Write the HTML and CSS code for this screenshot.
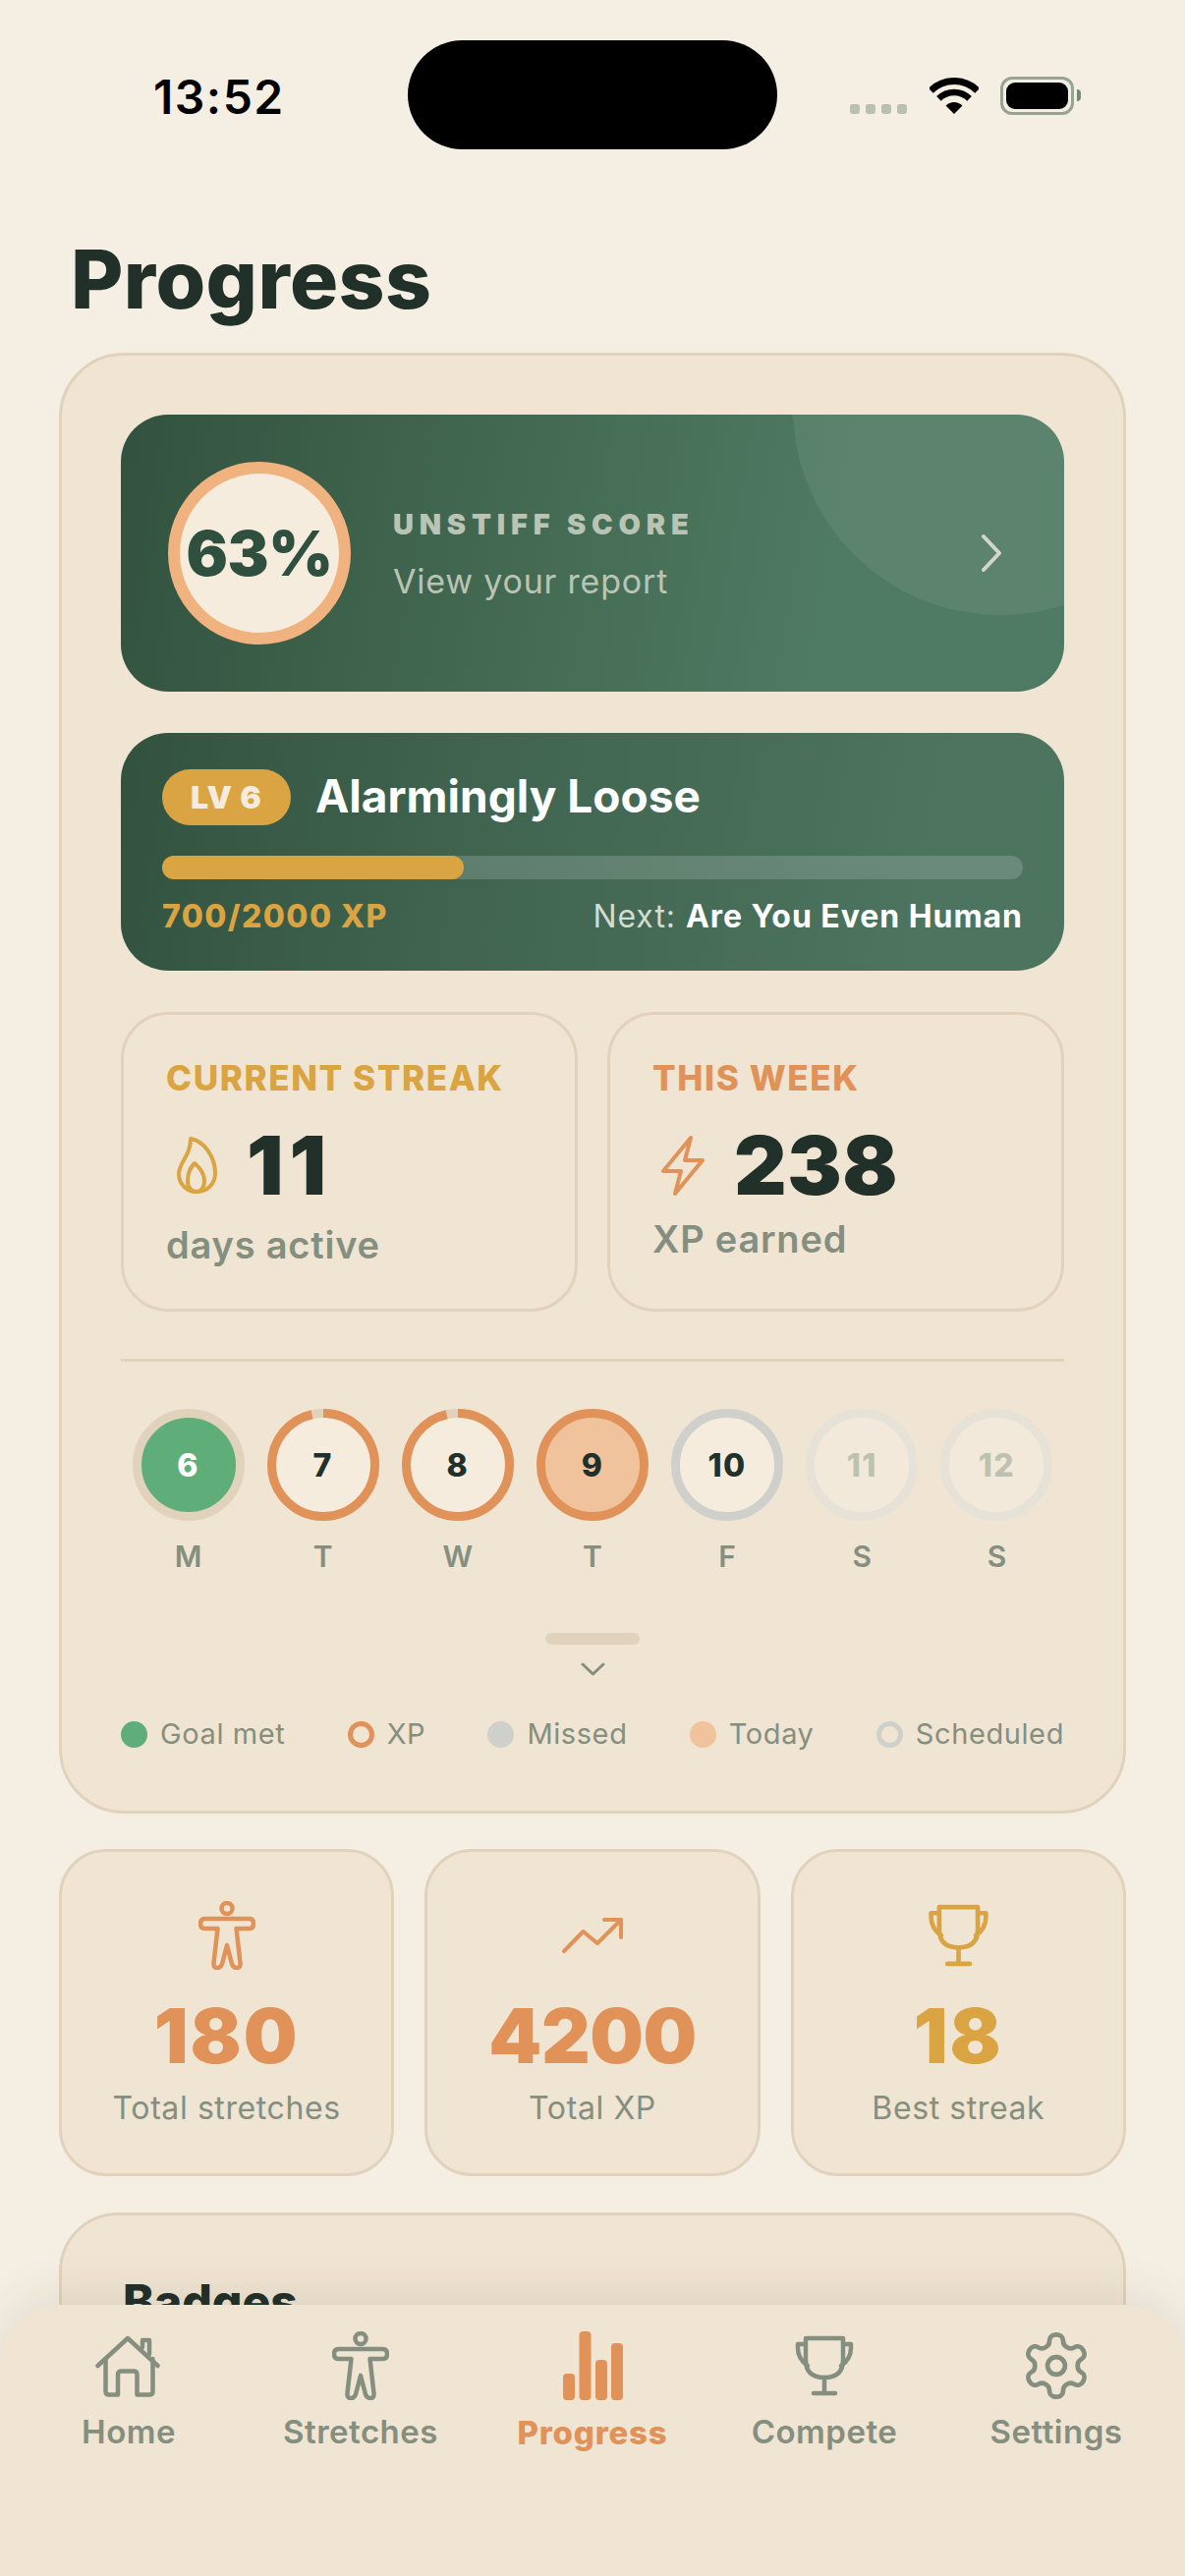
FILE: index.html
```html
<!DOCTYPE html>
<html lang="en">
<head>
    <meta charset="UTF-8">
    <meta name="viewport" content="width=device-width, initial-scale=1.0">
    <title>Progress</title>
    <link rel="stylesheet" href="styles.css">
</head>
<body>
<div class="screen">

    <!-- Status bar -->
    <div class="status">
        <span class="time">13:52</span>
        <div class="island"></div>
        <div class="status-icons">
            <div class="signal"><i></i><i></i><i></i><i></i></div>
            <svg class="wifi" width="50" height="37" viewBox="0 0 50 37">
                <path d="M1.3 13.3A33.5 33.5 0 0 1 48.7 13.3" fill="none" stroke="#000" stroke-width="7"/>
                <path d="M9.4 21.4A22 22 0 0 1 40.6 21.4" fill="none" stroke="#000" stroke-width="6.5"/>
                <path d="M25 37L16.5 28.5A12 12 0 0 1 33.5 28.5Z" fill="#000"/>
            </svg>
            <div class="battery"><div class="battery-fill"></div></div>
            <div class="battery-cap"></div>
        </div>
    </div>

    <h1 class="title">Progress</h1>

    <div class="card main-card">
        <!-- Score -->
        <div class="score">
            <div class="score-circle"></div>
            <div class="score-ring">63%</div>
            <div class="score-text">
                <div class="score-label">UNSTIFF SCORE</div>
                <div class="score-link">View your report</div>
            </div>
            <svg class="score-chevron" width="24" height="40" viewBox="0 0 24 40">
                <path d="M4 3L20 20L4 37" fill="none" stroke="#d4d6cd" stroke-width="4" stroke-linecap="round" stroke-linejoin="round"/>
            </svg>
        </div>

        <!-- Level -->
        <div class="level">
            <div class="level-top">
                <span class="level-badge">LV 6</span>
                <span class="level-name">Alarmingly Loose</span>
            </div>
            <div class="level-bar"><div class="level-fill"></div></div>
            <div class="level-foot">
                <span class="level-xp">700/2000 XP</span>
                <span class="level-next">Next: <b>Are You Even Human</b></span>
            </div>
        </div>

        <!-- Streak and week -->
        <div class="tiles">
            <div class="tile">
                <div class="tile-label gold">CURRENT STREAK</div>
                <div class="tile-value">
                    <svg class="flame" width="41" height="58" viewBox="0 0 41 58" fill="none" stroke="#d9a441" stroke-width="4" stroke-linejoin="round">
                        <path d="M14 2C27 4 39 20 39 37C39 48 31 56 20 56C10 56 2 48 2 38C2 26 14 20 14 2Z"/>
                        <path d="M18 27C24 32 28 38 28 45C28 52 24 56 20 56C15 56 11 52 11 45C11 38 14 31 18 27Z"/>
                    </svg>
                    <span class="spaced">11</span>
                </div>
                <div class="tile-sub">days active</div>
            </div>
            <div class="tile">
                <div class="tile-label orange">THIS WEEK</div>
                <div class="tile-value">
                    <svg class="bolt" width="45" height="62" viewBox="0 0 45 62" fill="none" stroke="#e09259" stroke-width="4" stroke-linejoin="round">
                        <path d="M31 3L3 37H21L15 60L43 26H25Z"/>
                    </svg>
                    <span>238</span>
                </div>
                <div class="tile-sub tile-sub-tight">XP earned</div>
            </div>
        </div>

        <div class="divider"></div>

        <!-- Week -->
        <div class="week">
            <div class="day">
                <div class="day-ring">
                    <svg width="114" height="114" viewBox="0 0 114 114">
                        <circle class="disc-goal" cx="57" cy="57" r="50"/>
                        <circle class="track" cx="57" cy="57" r="52.5"/>
                    </svg>
                    <span class="day-num white">6</span>
                </div>
                <span class="day-name">M</span>
            </div>
            <div class="day">
                <div class="day-ring">
                    <svg width="114" height="114" viewBox="0 0 114 114">
                        <circle class="disc" cx="57" cy="57" r="50"/>
                        <circle class="track" cx="57" cy="57" r="52.5"/>
                        <circle class="arc" cx="57" cy="57" r="52.5" pathLength="100" stroke-dasharray="96.5 3.5"/>
                    </svg>
                    <span class="day-num">7</span>
                </div>
                <span class="day-name">T</span>
            </div>
            <div class="day">
                <div class="day-ring">
                    <svg width="114" height="114" viewBox="0 0 114 114">
                        <circle class="disc" cx="57" cy="57" r="50"/>
                        <circle class="track" cx="57" cy="57" r="52.5"/>
                        <circle class="arc" cx="57" cy="57" r="52.5" pathLength="100" stroke-dasharray="96.5 3.5"/>
                    </svg>
                    <span class="day-num">8</span>
                </div>
                <span class="day-name">W</span>
            </div>
            <div class="day">
                <div class="day-ring">
                    <svg width="114" height="114" viewBox="0 0 114 114">
                        <circle class="disc-today" cx="57" cy="57" r="50"/>
                        <circle class="arc" cx="57" cy="57" r="52.5"/>
                    </svg>
                    <span class="day-num">9</span>
                </div>
                <span class="day-name">T</span>
            </div>
            <div class="day">
                <div class="day-ring">
                    <svg width="114" height="114" viewBox="0 0 114 114">
                        <circle class="disc" cx="57" cy="57" r="50"/>
                        <circle class="missed" cx="57" cy="57" r="52.5"/>
                    </svg>
                    <span class="day-num">10</span>
                </div>
                <span class="day-name">F</span>
            </div>
            <div class="day">
                <div class="day-ring">
                    <svg width="114" height="114" viewBox="0 0 114 114">
                        <circle class="disc-later" cx="57" cy="57" r="50"/>
                        <circle class="later" cx="57" cy="57" r="52.5"/>
                    </svg>
                    <span class="day-num day-num-later">11</span>
                </div>
                <span class="day-name">S</span>
            </div>
            <div class="day">
                <div class="day-ring">
                    <svg width="114" height="114" viewBox="0 0 114 114">
                        <circle class="disc-later" cx="57" cy="57" r="50"/>
                        <circle class="later" cx="57" cy="57" r="52.5"/>
                    </svg>
                    <span class="day-num day-num-later">12</span>
                </div>
                <span class="day-name">S</span>
            </div>
        </div>

        <div class="handle"></div>
        <svg class="handle-chevron" width="25" height="14" viewBox="0 0 25 14">
            <path d="M2 2L12.5 12L23 2" fill="none" stroke="#848f80" stroke-width="3" stroke-linecap="round" stroke-linejoin="round"/>
        </svg>

        <div class="legend">
            <div class="legend-item"><i class="dot dot-goal"></i>Goal met</div>
            <div class="legend-item"><i class="dot dot-xp"></i>XP</div>
            <div class="legend-item"><i class="dot dot-missed"></i>Missed</div>
            <div class="legend-item"><i class="dot dot-today"></i>Today</div>
            <div class="legend-item"><i class="dot dot-sched"></i>Scheduled</div>
        </div>
    </div>

    <!-- Totals -->
    <div class="totals">
        <div class="card total">
            <div class="total-icon">
                <svg width="58" height="70" viewBox="0 0 58 70" fill="none" stroke="#e09259" stroke-width="4.5" stroke-linejoin="round">
                    <circle cx="29" cy="7.5" r="5.5"/>
                    <path d="M29 45L24 64Q22.5 68 19 68Q15 68 15.5 63L19.5 28H6.5Q2 28 2 23Q2 18 6.5 18H51.5Q56 18 56 23Q56 28 51.5 28H38.5L42.5 63Q43 68 39 68Q35.5 68 34 64Z"/>
                </svg>
            </div>
            <div class="total-num orange">180</div>
            <div class="total-label">Total stretches</div>
        </div>
        <div class="card total">
            <div class="total-icon">
                <svg width="62" height="36" viewBox="0 0 62 36" fill="none" stroke="#e09259" stroke-width="4" stroke-linecap="round" stroke-linejoin="round">
                    <path d="M2 34L21.5 14L36 26L60 2"/>
                    <path d="M43 2H60V20"/>
                </svg>
            </div>
            <div class="total-num total-num-tight orange">4200</div>
            <div class="total-label">Total XP</div>
        </div>
        <div class="card total">
            <div class="total-icon">
                <svg width="63" height="64" viewBox="0 0 60 62" fill="none" stroke="#d9a441" stroke-width="4.5" stroke-linecap="round" stroke-linejoin="round">
                    <path d="M11 3H49V25Q49 43 30 43Q11 43 11 25Z"/>
                    <path d="M11 9H3V13Q3 24 13 31"/>
                    <path d="M49 9H57V13Q57 24 47 31"/>
                    <path d="M30 43V59"/>
                    <path d="M19 59H41"/>
                </svg>
            </div>
            <div class="total-num gold">18</div>
            <div class="total-label">Best streak</div>
        </div>
    </div>

    <div class="card badges">
        <h2 class="badges-title">Badges</h2>
    </div>

    <!-- Tab bar -->
    <nav class="nav">
        <div class="nav-item">
            <div class="nav-icon nav-icon-home">
                <svg width="66" height="63" viewBox="0 0 66 63" fill="none" stroke="#848f80" stroke-width="4.5" stroke-linecap="round" stroke-linejoin="round">
                    <path d="M2.5 31L33 3L63.5 31"/>
                    <path d="M10.5 24V57Q10.5 60.5 14 60.5H23V40Q23 36.5 26.5 36.5H39Q42.5 36.5 42.5 40V60.5H55Q58.5 60.5 58.5 57V24"/>
                    <path d="M48 12V5H55V19"/>
                </svg>
            </div>
            <span>Home</span>
        </div>
        <div class="nav-item">
            <div class="nav-icon">
                <svg width="58" height="70" viewBox="0 0 58 70" fill="none" stroke="#848f80" stroke-width="4.5" stroke-linejoin="round">
                    <circle cx="29" cy="7.5" r="5.5"/>
                    <path d="M29 45L24 64Q22.5 68 19 68Q15 68 15.5 63L19.5 28H6.5Q2 28 2 23Q2 18 6.5 18H51.5Q56 18 56 23Q56 28 51.5 28H38.5L42.5 63Q43 68 39 68Q35.5 68 34 64Z"/>
                </svg>
            </div>
            <span>Stretches</span>
        </div>
        <div class="nav-item nav-active">
            <div class="nav-icon">
                <svg width="61" height="70" viewBox="0 0 61 70" fill="#e09259">
                    <rect x="0" y="43" width="12" height="27" rx="4"/>
                    <rect x="16.5" y="0" width="12" height="70" rx="4"/>
                    <rect x="33" y="29" width="12" height="41" rx="4"/>
                    <rect x="49" y="12" width="12" height="58" rx="4"/>
                </svg>
            </div>
            <span>Progress</span>
        </div>
        <div class="nav-item">
            <div class="nav-icon">
                <svg width="60" height="62" viewBox="0 0 60 62" fill="none" stroke="#848f80" stroke-width="4.5" stroke-linecap="round" stroke-linejoin="round">
                    <path d="M11 3H49V25Q49 43 30 43Q11 43 11 25Z"/>
                    <path d="M11 9H3V13Q3 24 13 31"/>
                    <path d="M49 9H57V13Q57 24 47 31"/>
                    <path d="M30 43V59"/>
                    <path d="M19 59H41"/>
                </svg>
            </div>
            <span>Compete</span>
        </div>
        <div class="nav-item">
            <div class="nav-icon">
                <svg width="76" height="76" viewBox="0 0 24 24" fill="none" stroke="#848f80" stroke-width="1.5" stroke-linecap="round" stroke-linejoin="round">
                    <path d="M12.22 2h-.44a2 2 0 0 0-2 2v.18a2 2 0 0 1-1 1.73l-.43.25a2 2 0 0 1-2 0l-.15-.08a2 2 0 0 0-2.73.73l-.22.38a2 2 0 0 0 .73 2.73l.15.1a2 2 0 0 1 1 1.72v.51a2 2 0 0 1-1 1.74l-.15.09a2 2 0 0 0-.73 2.73l.22.38a2 2 0 0 0 2.73.73l.15-.08a2 2 0 0 1 2 0l.43.25a2 2 0 0 1 1 1.73V20a2 2 0 0 0 2 2h.44a2 2 0 0 0 2-2v-.18a2 2 0 0 1 1-1.73l.43-.25a2 2 0 0 1 2 0l.15.08a2 2 0 0 0 2.73-.73l.22-.39a2 2 0 0 0-.73-2.73l-.15-.08a2 2 0 0 1-1-1.74v-.5a2 2 0 0 1 1-1.74l.15-.09a2 2 0 0 0 .73-2.73l-.22-.38a2 2 0 0 0-2.73-.73l-.15.08a2 2 0 0 1-2 0l-.43-.25a2 2 0 0 1-1-1.73V4a2 2 0 0 0-2-2z"/>
                    <circle cx="12" cy="12" r="2.8"/>
                </svg>
            </div>
            <span>Settings</span>
        </div>
    </nav>

</div>
</body>
</html>
```

FILE: styles.css
```css
* { box-sizing: border-box; }
body { margin: 0; font-family: Inter, "Noto Sans", sans-serif; color: #22302a; }
.screen { position: relative; width: 1206px; height: 2622px; overflow: hidden; background: #f5efe3; }

/* status bar */
.status { display: flex; justify-content: space-between; height: 235px; padding: 75px 106px 0 156px; }
.time { font-size: 48px; line-height: 48px; font-weight: 600; letter-spacing: 1.5px; color: #000; }
.island { position: absolute; left: 415px; top: 41px; width: 376px; height: 111px; border-radius: 56px; background: #000; }
.status-icons { display: flex; align-items: flex-end; height: 41px; }
.signal { display: flex; gap: 6px; margin-right: 23px; }
.signal i { width: 10px; height: 10px; border-radius: 3px; background: #b9c0b0; }
.wifi { margin-right: 22px; }
.battery { width: 75px; height: 39px; padding: 3px; border: 3px solid #97a493; border-radius: 12px; margin-bottom: -1px; }
.battery-fill { width: 100%; height: 100%; border-radius: 9px; background: #000; }
.battery-cap { width: 4px; height: 12px; margin: 0 0 13px 3px; border-radius: 0 4px 4px 0; background: #6f8a78; }

.title { margin: 0 0 24px 72px; font-size: 82px; line-height: 100px; font-weight: 800; letter-spacing: 0.4px; }

/* cards */
.card { border: 3px solid #e0d2bb; background: #f0e4d2; }
.main-card { margin: 0 60px; padding: 60px 60px; border-radius: 66px; }

.score { position: relative; overflow: hidden; display: flex; align-items: center; height: 282px; padding: 0 66px 0 48px; border-radius: 48px; background: linear-gradient(100deg, #32523f 0%, #41664f 35%, #4f7a63 75%); }
.score-circle { position: absolute; left: 684px; top: -218px; width: 422px; height: 422px; border-radius: 50%; background: rgba(255, 255, 255, 0.07); }
.score-ring { position: relative; flex: none; display: flex; align-items: center; justify-content: center; width: 186px; height: 186px; border: 12px solid #f0b27e; border-radius: 50%; background: #f5ecdd; color: #2f4f3f; font-size: 63px; font-weight: 900; letter-spacing: -0.5px; }
.score-text { position: relative; margin-left: 43px; padding-top: 4px; }
.score-label { font-size: 29px; line-height: 36px; font-weight: 900; letter-spacing: 5.8px; color: #b9c4b4; }
.score-link { margin-top: 18px; font-size: 34px; line-height: 44px; letter-spacing: 0.8px; color: #b9c4b4; }
.score-chevron { position: relative; margin-left: auto; margin-right: -4px; }

.level { height: 242px; margin-top: 42px; padding: 37px 42px; border-radius: 48px; background: linear-gradient(100deg, #32523f 0%, #3f634f 35%, #4c745f 85%); }
.level-top { display: flex; align-items: center; gap: 25px; }
.level-badge { width: 131px; height: 57px; border-radius: 29px; background: #d9a441; color: #f5ecdd; font-size: 32px; line-height: 57px; font-weight: 900; letter-spacing: 1px; text-align: center; }
.level-name { margin-top: -3px; color: #fff; font-size: 46px; font-weight: 700; }
.level-bar { height: 24px; margin-top: 31px; border-radius: 12px; background: rgba(255, 255, 255, 0.17); }
.level-fill { width: 35%; height: 100%; border-radius: 12px; background: #d9a441; }
.level-foot { display: flex; justify-content: space-between; margin-top: 18px; font-size: 32px; line-height: 40px; }
.level-xp { color: #d9a441; font-weight: 800; letter-spacing: 1.4px; }
.level-next { color: #d6dbd0; letter-spacing: 0.95px; }
.level-next b { color: #fff; font-weight: 700; }

.tiles { display: grid; grid-template-columns: 1fr 1fr; gap: 30px; margin-top: 42px; }
.tile { height: 305px; padding: 42px 43px 0; border: 3px solid #e0d2bb; border-radius: 48px; }
.tile-label { font-size: 35px; line-height: 44px; font-weight: 800; letter-spacing: 1.6px; }
.gold { color: #d9a441; }
.orange { color: #e09259; }
.tile-value { display: flex; align-items: center; gap: 30px; height: 90px; margin-top: 22px; font-size: 83px; line-height: 90px; font-weight: 900; letter-spacing: 0.5px; }
.spaced { letter-spacing: 6px; }
.flame { margin-left: 11px; }
.bolt { margin-left: 8px; }
.tile-sub { margin-top: 13px; font-size: 38px; line-height: 46px; font-weight: 600; letter-spacing: 0.8px; color: #848f80; }
.tile-sub-tight { margin-top: 7px; }

.divider { height: 3px; margin-top: 48px; background: #e0d2bb; }

.week { display: grid; grid-template-columns: repeat(7, 1fr); margin-top: 48px; }
.day { display: flex; flex-direction: column; align-items: center; }
.day-ring { display: grid; width: 114px; height: 114px; }
.day-ring svg, .day-num { grid-area: 1 / 1; }
.day-num { align-self: center; justify-self: center; font-size: 32px; font-weight: 800; letter-spacing: 1.5px; }
.day-num-later { color: #bcc2b2; }
.white { color: #fff; }
.disc { fill: #f5ecdd; }
.disc-goal { fill: #5fae7a; }
.disc-today { fill: #f0c39d; }
.disc-later { fill: #f3e9da; }
.track, .arc, .missed, .later { fill: none; stroke-width: 9; }
.track { stroke: #e0d2bb; }
.missed { stroke: #cfd0cb; }
.later { stroke: #e6e2d8; }
.arc { stroke: #e09259; transform: rotate(-90deg); transform-origin: 57px 57px; }
.day-name { margin-top: 18px; font-size: 30px; line-height: 36px; font-weight: 600; color: #848f80; }

.handle { width: 96px; height: 12px; margin: 60px auto 0; border-radius: 6px; background: #e0d2bb; }
.handle-chevron { display: block; margin: 18px auto 0; }

.legend { display: flex; justify-content: space-between; margin-top: 41px; font-size: 29px; line-height: 36px; letter-spacing: 0.6px; color: #848f80; }
.legend-item { display: flex; align-items: center; gap: 13px; }
.dot { width: 27px; height: 27px; border-radius: 50%; }
.dot-goal { background: #5fae7a; }
.dot-xp { border: 5px solid #e09259; }
.dot-missed { background: #cfd0cb; }
.dot-today { background: #f0c39d; }
.dot-sched { border: 5px solid #cfd0cb; }

.totals { display: grid; grid-template-columns: repeat(3, 1fr); gap: 31px; margin: 36px 60px 0; }
.total { display: flex; flex-direction: column; align-items: center; height: 333px; padding-top: 49px; border-radius: 48px; }
.total-icon { display: flex; align-items: center; justify-content: center; height: 72px; }
.total-num { margin-top: 24px; font-size: 77px; line-height: 84px; font-weight: 900; letter-spacing: 2px; }
.total-num-tight { letter-spacing: -0.5px; }
.total-label { margin-top: 12px; font-size: 32px; line-height: 40px; letter-spacing: 0.6px; color: #848f80; }

.badges { height: 400px; margin: 37px 60px 0; padding: 60px 62px; border-radius: 60px; }
.badges-title { margin: 0; font-size: 48px; line-height: 56px; font-weight: 800; }

/* tab bar */
.nav { position: absolute; left: 0; right: 0; bottom: 0; display: flex; height: 276px; padding: 27px 13px 0; border-radius: 60px 60px 0 0; background: #f0e4d2; box-shadow: 0 -8px 50px rgba(60, 50, 30, 0.1); }
.nav-item { flex: 1; display: flex; flex-direction: column; align-items: center; font-size: 33px; line-height: 40px; font-weight: 600; letter-spacing: 0.5px; color: #848f80; }
.nav-icon { display: flex; align-items: center; justify-content: center; height: 70px; margin-bottom: 12px; }
.nav-icon-home { margin-right: 2px; }
.nav-active { font-weight: 800; letter-spacing: 0.8px; color: #e09259; }
.nav-active .nav-icon { margin-bottom: 13px; }
```
